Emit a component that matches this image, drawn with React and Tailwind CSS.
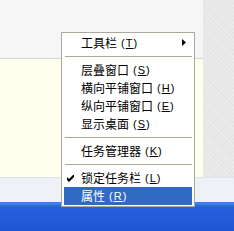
import React from "react";

const items = [
  { t: "工具栏", k: "T", arrow: true },
  { sep: true },
  { t: "层叠窗口", k: "S" },
  { t: "横向平铺窗口", k: "H" },
  { t: "纵向平铺窗口", k: "E" },
  { t: "显示桌面", k: "S" },
  { sep: true },
  { t: "任务管理器", k: "K" },
  { sep: true },
  { t: "锁定任务栏", k: "L", check: true },
  { t: "属性", k: "R", active: true },
];

function Acc({ k }) {
  return (
    <span className="ml-[4px] font-['Liberation_Sans',sans-serif] text-[11px] tracking-[1px]">
      (<span className="underline underline-offset-1">{k}</span>)
    </span>
  );
}

export default function App() {
  return (
    <div className="relative w-[234px] h-[231px] overflow-hidden font-['Noto_Sans_CJK_SC','Noto_Sans',sans-serif] select-none">
      <div className="flex flex-col w-full h-full">
        <div className="flex h-[177px]">
          <div className="flex flex-col w-[203px]">
            <div className="h-[59px] bg-[#f6f6f6] border-b border-[#d6d6d6]" />
            <div className="flex-1 bg-[#fffff0]" />
          </div>
          <div className="flex-1 bg-[#e9e9e9] bg-[repeating-linear-gradient(45deg,#e4e4e4_0px,#e4e4e4_1px,#ececec_1px,#ececec_2px,#e8e8e8_2px,#e8e8e8_3px)]" />
        </div>
        <div className="h-[25px] bg-[#eef2f7] border-t border-[#e0e4ea]" />
        <div className="flex-1 bg-[linear-gradient(180deg,#3168d5_0px,#4a8cf0_1px,#3d7ef0_2px,#2a65e0_4px,#245edc_8px,#225bd8_20px,#1f55d0_29px)]" />
      </div>

      <div className="absolute left-[61px] top-[32px] w-[134px] bg-white border border-[#aca899] px-[2px] py-[1px] text-[12px] leading-none text-black">
        {items.map((it, i) =>
          it.sep ? (
            <div key={i} className="h-[9px] flex items-center">
              <div className="ml-[1px] w-full h-px bg-[#aca899]" />
            </div>
          ) : (
            <div
              key={i}
              className={
                "relative h-[18px] flex items-center pl-[17px] " +
                (it.active ? "bg-[#316ac5] text-white" : "")
              }
            >
              {it.check && (
                <svg className="absolute left-[3px] top-[6px]" width="7" height="7" viewBox="0 0 7 7">
                  <polygon points="0,2 2,4 7,-1 7,2 2,7 0,5" fill="black" />
                </svg>
              )}
              <span>{it.t}</span>
              <Acc k={it.k} />
              {it.arrow && (
                <svg className="absolute right-[6px] top-[5px]" width="4" height="7" viewBox="0 0 4 7">
                  <polygon points="0,0 4,3.5 0,7" fill="black" />
                </svg>
              )}
            </div>
          )
        )}
      </div>
    </div>
  );
}
